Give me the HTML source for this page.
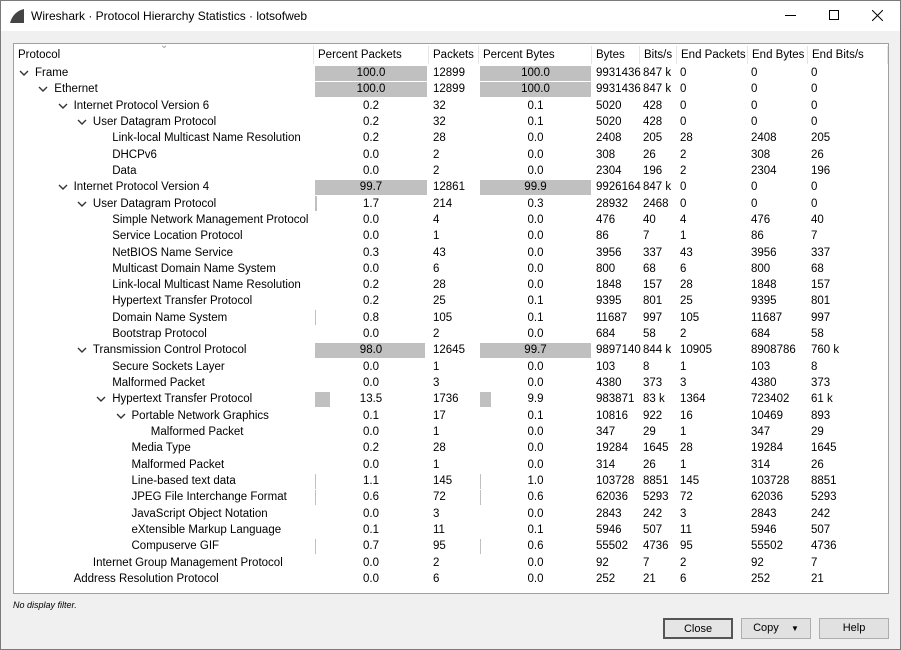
<!DOCTYPE html>
<html><head><meta charset="utf-8"><style>
*{margin:0;padding:0;box-sizing:border-box}
body{width:901px;height:650px;background:#f0f0f0;font-family:"Liberation Sans",sans-serif;font-size:11.5px;color:#000;position:relative;overflow:hidden;border:1px solid #7a7a7a}
.title{position:absolute;left:0;top:0;width:899px;height:30px;background:#fff}
.title .t{position:absolute;left:30px;top:8px;font-size:12px}
.box{position:absolute;left:12px;top:42px;width:876px;height:551px;background:#fff;border:1px solid #a0a0a0}
.c{position:absolute;white-space:nowrap;line-height:16px;height:16px}
.bar{position:absolute;background:#c0c0c0;height:15px}
.hdr{position:absolute;top:2px;height:18px;border-right:1px solid #e5e5e5;line-height:18px;padding-left:4px;white-space:nowrap;overflow:hidden}
.btn{position:absolute;top:617px;height:21px;width:70px;background:#e1e1e1;border:1px solid #adadad;text-align:center;line-height:19px;font-size:11px}
</style></head><body>
<div class="title">
<svg style="position:absolute;left:8px;top:7px" width="16" height="16" viewBox="0 0 16 16"><path d="M1 15 C3 8 7 3 15 1 L15 15 Z" fill="#444"/></svg>
<div class="t">Wireshark · Protocol Hierarchy Statistics · lotsofweb</div>
<div style="position:absolute;left:784px;top:14px;width:11px;height:1px;background:#000"></div>
<div style="position:absolute;left:828px;top:9px;width:10px;height:10px;border:1px solid #000"></div>
<svg style="position:absolute;left:871px;top:9px" width="11" height="11"><path d="M0 0L11 11M11 0L0 11" stroke="#000" stroke-width="1"/></svg>
</div>
<div class="box" id="box">
<div class="hdr" style="left:0;width:300px">Protocol</div>
<div style="position:absolute;left:146px;top:-4px;color:#999;font-size:10px">&#8964;</div>
<div class="hdr" style="left:300px;width:115px">Percent Packets</div>
<div class="hdr" style="left:415px;width:50px">Packets</div>
<div class="hdr" style="left:465px;width:113px">Percent Bytes</div>
<div class="hdr" style="left:578px;width:48px">Bytes</div>
<div class="hdr" style="left:626px;width:37px">Bits/s</div>
<div class="hdr" style="left:663px;width:71px">End Packets</div>
<div class="hdr" style="left:734px;width:60px">End Bytes</div>
<div class="hdr" style="left:794px;width:80px">End Bits/s</div>
</div>
<div style="position:absolute;left:12px;top:599px;font-size:9px;font-style:italic">No display filter.</div>
<div class="btn" style="left:662px;border:2px solid #555;background:#e5e5e5">Close</div>
<div class="btn" style="left:740px">Copy &nbsp;&nbsp;&nbsp;<span style="font-size:8px">▼</span></div>
<div class="btn" style="left:818px">Help</div>
<script>
var R=[
[0,1,"Frame","100.0","12899","100.0","9931436","847 k","0","0","0"],
[1,1,"Ethernet","100.0","12899","100.0","9931436","847 k","0","0","0"],
[2,1,"Internet Protocol Version 6","0.2","32","0.1","5020","428","0","0","0"],
[3,1,"User Datagram Protocol","0.2","32","0.1","5020","428","0","0","0"],
[4,0,"Link-local Multicast Name Resolution","0.2","28","0.0","2408","205","28","2408","205"],
[4,0,"DHCPv6","0.0","2","0.0","308","26","2","308","26"],
[4,0,"Data","0.0","2","0.0","2304","196","2","2304","196"],
[2,1,"Internet Protocol Version 4","99.7","12861","99.9","9926164","847 k","0","0","0"],
[3,1,"User Datagram Protocol","1.7","214","0.3","28932","2468","0","0","0"],
[4,0,"Simple Network Management Protocol","0.0","4","0.0","476","40","4","476","40"],
[4,0,"Service Location Protocol","0.0","1","0.0","86","7","1","86","7"],
[4,0,"NetBIOS Name Service","0.3","43","0.0","3956","337","43","3956","337"],
[4,0,"Multicast Domain Name System","0.0","6","0.0","800","68","6","800","68"],
[4,0,"Link-local Multicast Name Resolution","0.2","28","0.0","1848","157","28","1848","157"],
[4,0,"Hypertext Transfer Protocol","0.2","25","0.1","9395","801","25","9395","801"],
[4,0,"Domain Name System","0.8","105","0.1","11687","997","105","11687","997"],
[4,0,"Bootstrap Protocol","0.0","2","0.0","684","58","2","684","58"],
[3,1,"Transmission Control Protocol","98.0","12645","99.7","9897140","844 k","10905","8908786","760 k"],
[4,0,"Secure Sockets Layer","0.0","1","0.0","103","8","1","103","8"],
[4,0,"Malformed Packet","0.0","3","0.0","4380","373","3","4380","373"],
[4,1,"Hypertext Transfer Protocol","13.5","1736","9.9","983871","83 k","1364","723402","61 k"],
[5,1,"Portable Network Graphics","0.1","17","0.1","10816","922","16","10469","893"],
[6,0,"Malformed Packet","0.0","1","0.0","347","29","1","347","29"],
[5,0,"Media Type","0.2","28","0.0","19284","1645","28","19284","1645"],
[5,0,"Malformed Packet","0.0","1","0.0","314","26","1","314","26"],
[5,0,"Line-based text data","1.1","145","1.0","103728","8851","145","103728","8851"],
[5,0,"JPEG File Interchange Format","0.6","72","0.6","62036","5293","72","62036","5293"],
[5,0,"JavaScript Object Notation","0.0","3","0.0","2843","242","3","2843","242"],
[5,0,"eXtensible Markup Language","0.1","11","0.1","5946","507","11","5946","507"],
[5,0,"Compuserve GIF","0.7","95","0.6","55502","4736","95","55502","4736"],
[3,0,"Internet Group Management Protocol","0.0","2","0.0","92","7","2","92","7"],
[2,0,"Address Resolution Protocol","0.0","6","0.0","252","21","6","252","21"]];
var h="";
R.forEach(function(r,i){
var y=21+i*16.32;var ind=21+r[0]*19.3;
if(r[1])h+='<svg class="c" style="left:'+(ind-16)+'px;top:'+(y+4)+'px" width="10" height="8"><path d="M1 2L5 6L9 2" stroke="#333" stroke-width="1.4" fill="none"/></svg>';
h+='<div class="c" style="left:'+ind+'px;top:'+y+'px">'+r[2]+'</div>';
var pp=parseFloat(r[3]),pb=parseFloat(r[5]);
if(pp>0.5)h+='<div class="bar" style="left:301px;top:'+(y+0.5)+'px;width:'+Math.max(1,112*pp/100)+'px"></div>';
if(pb>0.5)h+='<div class="bar" style="left:466px;top:'+(y+0.5)+'px;width:'+Math.max(1,111*pb/100)+'px"></div>';
h+='<div class="c" style="left:301px;width:112px;text-align:center;top:'+y+'px">'+r[3]+'</div>';
h+='<div class="c" style="left:419px;top:'+y+'px">'+r[4]+'</div>';
h+='<div class="c" style="left:466px;width:111px;text-align:center;top:'+y+'px">'+r[5]+'</div>';
h+='<div class="c" style="left:582px;top:'+y+'px">'+r[6]+'</div>';
h+='<div class="c" style="left:629px;top:'+y+'px">'+r[7]+'</div>';
h+='<div class="c" style="left:666px;top:'+y+'px">'+r[8]+'</div>';
h+='<div class="c" style="left:737px;top:'+y+'px">'+r[9]+'</div>';
h+='<div class="c" style="left:797px;top:'+y+'px">'+r[10]+'</div>';
});
document.getElementById("box").insertAdjacentHTML("beforeend",h);
</script>
</body></html>
